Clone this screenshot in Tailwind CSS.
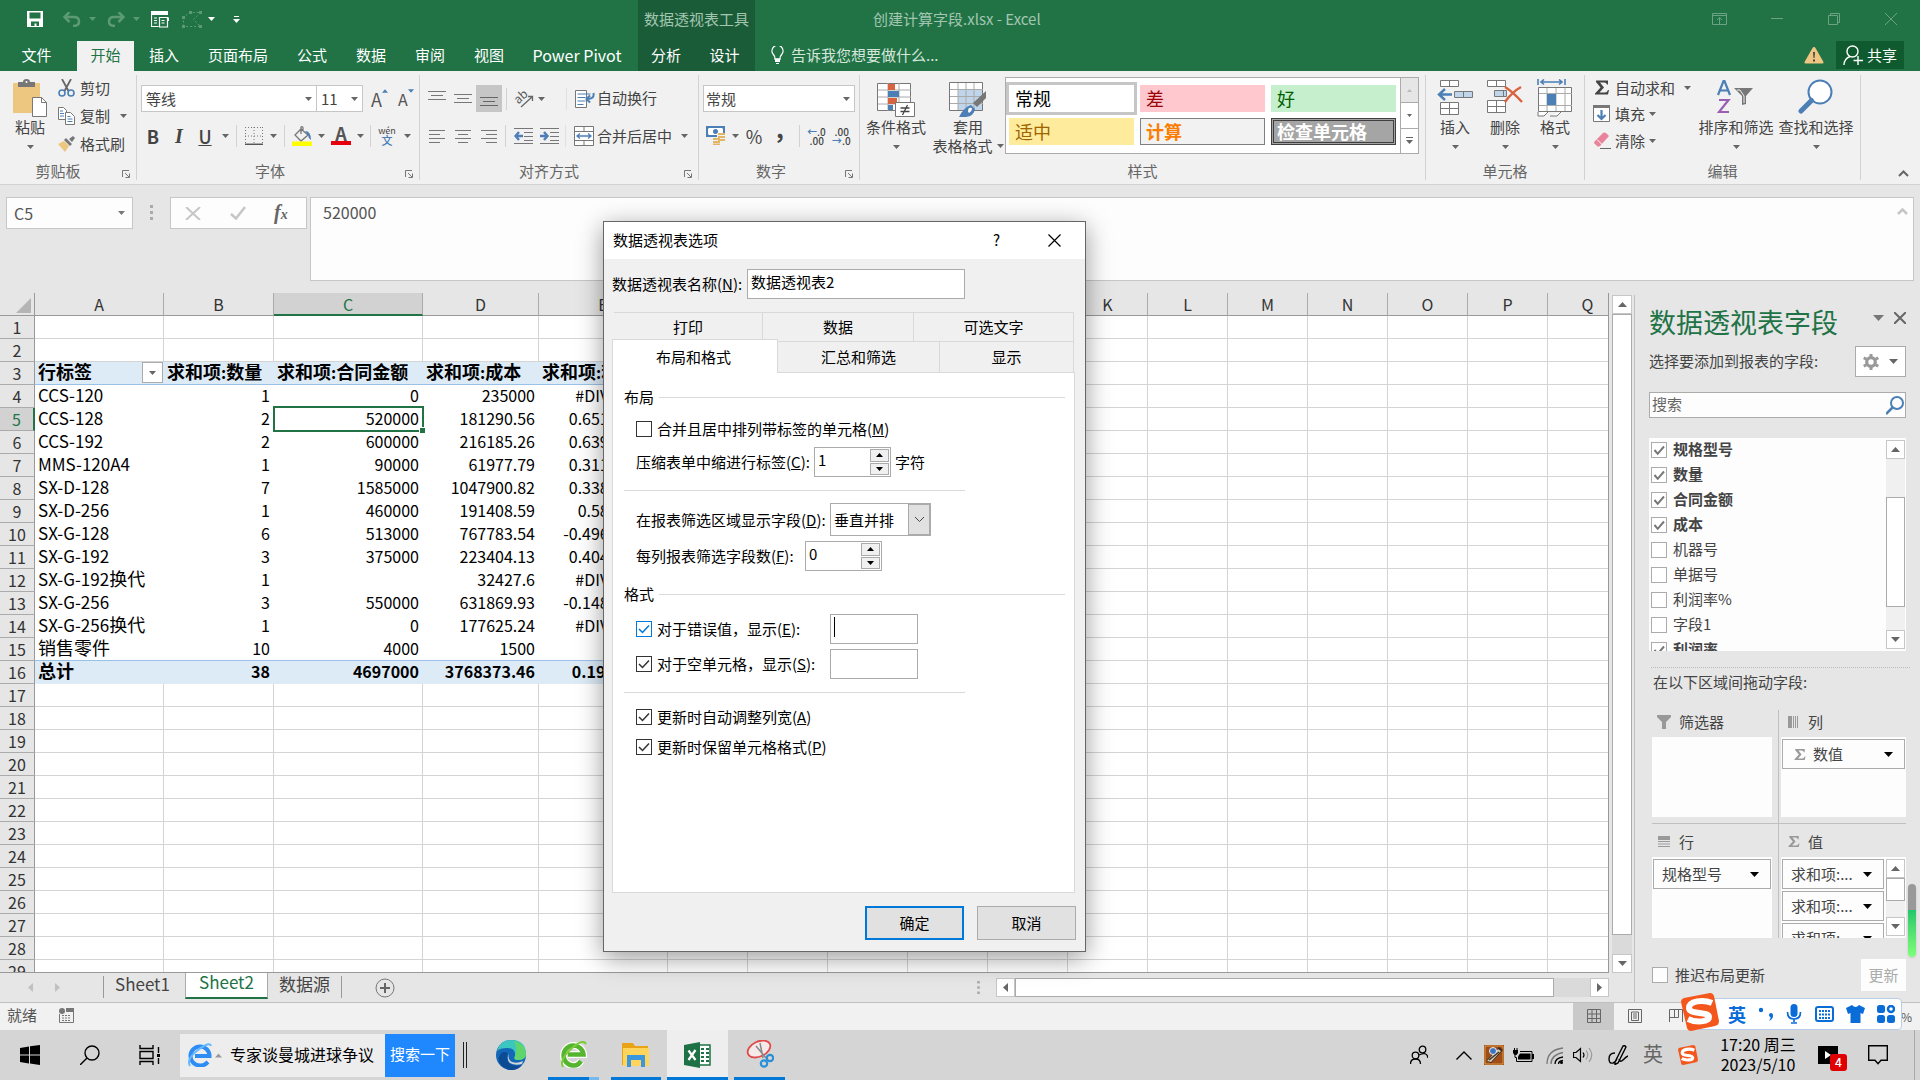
<!DOCTYPE html>
<html lang="zh-CN">
<head>
<meta charset="utf-8">
<title>创建计算字段.xlsx - Excel</title>
<script src="https://cdn.jsdelivr.net/npm/@tailwindcss/browser@4"></script>
</head>
<body class="flex h-screen flex-col overflow-hidden bg-[#e6e6e6] font-['Noto_Sans_CJK_SC',sans-serif] text-[15px] leading-5 text-[#444]">

<!-- Shared glyphs -->
<svg class="hidden" aria-hidden="true">
  <symbol id="down" viewBox="0 0 7 4"><path d="M0 0h7L3.500 4z" fill="currentColor"/></symbol>
  <symbol id="down-lg" viewBox="0 0 11 6"><path d="M0 0h11L5.500 6z" fill="currentColor"/></symbol>
  <symbol id="up-lg" viewBox="0 0 9 5"><path d="M0 5h9L4.500 0z" fill="currentColor"/></symbol>
  <symbol id="launch" viewBox="0 0 8 8"><path d="M.5 7V.5H7M3 3l4 4M7.500 3.500v4h-4" fill="none" stroke="#777"/></symbol>
  <symbol id="tick" viewBox="0 0 16 16"><path d="M3 8l3.500 3.500L13 4.500" fill="none" stroke="currentColor" stroke-width="1.500"/></symbol>
  <symbol id="tick-bold" viewBox="0 0 16 16"><path d="M3.500 8l3.200 3.800L13 4.500" fill="none" stroke="#777" stroke-width="2"/></symbol>
  <symbol id="sogou" viewBox="0 0 38 38"><path d="M3 5L29 0q3 0 4 3l5 25q0 4-4 5L10 38q-3 0-4-3L0 9q0-3 3-4z" fill="#f4571c"/><path d="M31 10C22 6 8 8 8 15c0 7 20 3 20 9 0 5-13 6-21 2" fill="none" stroke="#fff" stroke-width="6"/></symbol>
  <symbol id="sigma" viewBox="0 0 14 14"><path d="M1 0h12v4h-1q-.5-2-3-2H5l4 5-4.500 5H10q2 0 3-2.500h1L13 14H0v-1l5.500-6L1 1.500z" fill="currentColor"/></symbol>
</svg>

<!-- Title bar and ribbon tabs -->
<header class="flex h-[71px] shrink-0 bg-[#217346] text-white">
  <div class="flex w-[638px] shrink-0 flex-col">
    <div class="flex h-[41px] items-center pb-[3px] pl-[27px] text-[#5c9a76]">
      <svg class="h-4 w-4" viewBox="0 0 16 16"><path d="M0 0h16v16H0z" fill="#fff"/><path d="M2.500 1.500h11v6h-11zM4 10.500h8V15H9.500v-2.500H7.500V15H4z" fill="#217346"/></svg>
      <svg class="ml-5 h-[15px] w-[18px]" viewBox="0 0 18 15"><path d="M1 5h10q5 0 5 4.500T10 14M6.500 0L1.500 5l5 5" fill="none" stroke="currentColor" stroke-width="2.500"/></svg>
      <svg class="ml-2 h-1 w-[7px]"><use href="#down"/></svg>
      <svg class="ml-[11px] h-[15px] w-[18px]" viewBox="0 0 18 15"><path d="M17 5H7Q2 5 2 9.500T8 14M11.500 0l5 5-5 5" fill="none" stroke="currentColor" stroke-width="2.500"/></svg>
      <svg class="ml-2 h-1 w-[7px]"><use href="#down"/></svg>
      <svg class="ml-[11px] h-[17px] w-[18px]" viewBox="0 0 18 17"><path d="M0 0h17v4H0z" fill="#fff"/><path d="M.5 4v11.500h7M3 7h3M3 9.500h3M3 12h3M8.500 6.500h8v9.500H8.500zM10.500 9.500h3M10.500 12h3M16.500 7h1v3" fill="none" stroke="#fff" stroke-width="1.200"/></svg>
      <svg class="ml-[13px] h-[17px] w-5" viewBox="0 0 20 17"><path d="M1.500 15.500v-9l6-5h11l-7 7 7 7z" fill="none" stroke="currentColor" stroke-dasharray="2 2"/><path d="M0 14h3v3H0zM0 5h3v3H0zM7 0h3v3H7zM17 0h3v3h-3zM17 14h3v3h-3z" fill="currentColor"/></svg>
      <svg class="ml-[6px] h-1 w-[7px] text-white"><use href="#down"/></svg>
      <svg class="ml-[18px] h-[7px] w-[7px] text-white" viewBox="0 0 7 7"><path d="M1 0h5v1H1zM0 3h7L3.500 7z" fill="currentColor"/></svg>
    </div>
    <nav class="flex flex-1 items-stretch">
      <button class="w-[77px] pr-1 pb-[3px]">文件</button>
      <button class="w-[57px] bg-[#f1f1f1] pb-[3px] text-[#217346]">开始</button>
      <button class="w-[60px] pb-[3px]">插入</button>
      <button class="w-[88px] pb-[3px]">页面布局</button>
      <button class="w-[60px] pb-[3px]">公式</button>
      <button class="w-[58px] pb-[3px]">数据</button>
      <button class="w-[60px] pb-[3px]">审阅</button>
      <button class="w-[58px] pb-[3px]">视图</button>
      <button class="w-[118px] pb-[3px] text-base leading-5">Power Pivot</button>
    </nav>
  </div>
  <div class="flex w-[117px] shrink-0 flex-col bg-[#1b5c38]">
    <div class="flex h-[41px] items-center justify-center pb-[3px] text-[#a3c6b1]">数据透视表工具</div>
    <nav class="flex flex-1"><button class="w-[56px] pb-[3px]">分析</button><button class="w-[61px] pb-[3px]">设计</button></nav>
  </div>
  <div class="flex min-w-0 flex-1 flex-col">
    <div class="flex h-[41px] items-center justify-between pr-[23px] pb-[3px] pl-[118px] text-[#a3c6b1]">
      <span>创建计算字段.xlsx - Excel</span>
      <span class="flex items-center text-[#6ba384]">
        <button aria-label="功能区显示选项"><svg class="h-3 w-[15px]" viewBox="0 0 15 12"><path d="M.5.500h14v11H.5zM.5 2.500h14M7.500 11V5M5 7l2.500-2.500L10 7" fill="none" stroke="currentColor"/></svg></button>
        <button class="ml-11" aria-label="最小化"><svg class="h-3 w-3" viewBox="0 0 12 12"><path d="M0 5.500h12" stroke="currentColor"/></svg></button>
        <button class="ml-[45px]" aria-label="还原"><svg class="h-3 w-3" viewBox="0 0 12 12"><path d="M.5 2.500h9v9h-9zM2.500 2.500v-2h9v9h-2" fill="none" stroke="currentColor"/></svg></button>
        <button class="ml-[45px]" aria-label="关闭"><svg class="h-3 w-3" viewBox="0 0 12 12"><path d="M0 0l12 12M12 0L0 12" stroke="currentColor"/></svg></button>
      </span>
    </div>
    <div class="flex flex-1 items-center pr-4 pb-[2px] pl-4 text-[#d5e6dc]">
      <svg class="mr-[7px] h-[18px] w-[13px]" viewBox="0 0 13 18"><path d="M4 13q0-3-2-5A5.500 5.500 0 1 1 11 8q-2 2-2 5z" fill="none" stroke="#fff" stroke-width="1.300"/><path d="M4 13h5v3H4zM5 17h3v1H5z" fill="#fff"/></svg>
      <span class="flex-1">告诉我您想要做什么...</span>
      <svg class="mr-3 h-[18px] w-5" viewBox="0 0 20 18"><path d="M10 1q1 0 1.500 1L19.500 16q0 1.500-1 1.500h-17q-1 0-1-1.500L8.500 2Q9 1 10 1z" fill="#eec681"/><path d="M9 6h2l-.5 6h-1zM9 13.500h2v2H9z" fill="#444"/></svg>
      <button class="flex h-[28px] w-[68px] items-center justify-center gap-1 bg-[#0f5b2f] text-white">
        <svg class="h-5 w-5" viewBox="0 0 20 20"><circle cx="9.500" cy="6.500" r="5.500" fill="none" stroke="#fff" stroke-width="1.400"/><path d="M1 20q0-6 6-8.500M15 11v9M10.500 15.500H20" fill="none" stroke="#fff" stroke-width="1.400"/></svg>共享
      </button>
    </div>
  </div>
</header>

<!-- Ribbon -->
<section class="flex h-[114px] shrink-0 border-b border-[#d2d2d2] bg-[#f1f1f1] py-1 text-[#444]">
  <!-- clipboard -->
  <div class="relative flex w-[137px] shrink-0 flex-col border-r border-[#d2d2d2]">
    <div class="flex flex-1">
      <button class="flex w-14 flex-col items-center pt-1 pl-1">
        <svg class="h-[38px] w-[34px]" viewBox="0 0 34 38"><path d="M0 4h27v30H0z" fill="#edc77f"/><path d="M5 8V3h5q0-3 3.500-3T17 3h5v5z" fill="#777"/><circle cx="13.500" cy="3" r="1" fill="#fff"/><path d="M19.500 18.500h9l5 5v14h-14z" fill="#fff" stroke="#777"/><path d="M28.500 18.500v5h5" fill="none" stroke="#777"/></svg>
        <span>粘贴</span><svg class="mt-2 h-1 w-[7px] text-[#666]"><use href="#down"/></svg>
      </button>
      <div class="flex flex-col">
        <button class="flex h-[26px] items-center pl-[2px]"><svg class="mr-[5px] h-[18px] w-[17px]" viewBox="0 0 17 18"><path d="M4 0l6.500 12M13 0L6.500 12" stroke="#666" stroke-width="1.800"/><circle cx="4" cy="14" r="3" fill="none" stroke="#4b7fb5" stroke-width="1.600"/><circle cx="13" cy="14" r="3" fill="none" stroke="#4b7fb5" stroke-width="1.600"/></svg>剪切</button>
        <button class="flex h-[29px] items-center pl-[2px]"><svg class="mr-[5px] h-[18px] w-[17px]" viewBox="0 0 17 18"><path d="M.5.500h5l3 3v9h-8z" fill="#fff" stroke="#777"/><path d="M2 4h3M2 6.500h4M2 9h4" stroke="#4b7fb5"/><path d="M7.500 5.500h5l4 4v8h-9z" fill="#fff" stroke="#777"/><path d="M9.500 9.500h3M9.500 12h5M9.500 14.500h5" stroke="#4b7fb5"/></svg>复制<svg class="ml-[10px] h-1 w-[7px] text-[#666]"><use href="#down"/></svg></button>
        <button class="flex h-[28px] items-center pl-[2px]"><svg class="mr-[5px] h-4 w-[17px]" viewBox="0 0 17 16"><path d="M0 8l6-3 5 5-4 6z" fill="#edc77f"/><path d="M6 4l2-2 6 6-2 2zM11 3l4-3 2 2-3 4z" fill="#777"/></svg>格式刷</button>
      </div>
    </div>
    <div class="flex h-[18px] items-center justify-center pr-5 text-[#666]">剪贴板</div>
    <svg class="absolute right-[6px] bottom-[2px] h-2 w-2"><use href="#launch"/></svg>
  </div>
  <!-- font -->
  <div class="relative flex w-[283px] shrink-0 flex-col border-r border-[#d2d2d2] pl-1">
    <div class="flex flex-1 flex-col gap-[10px] pt-[10px]">
      <div class="flex h-[27px] items-center">
        <button class="flex h-[27px] w-[176px] items-center justify-between border border-[#c6c6c6] bg-white px-1">等线<svg class="h-1 w-[7px] text-[#666]"><use href="#down"/></svg></button>
        <button class="-ml-px flex h-[27px] w-[47px] items-center justify-between border border-[#c6c6c6] bg-white px-1">11<svg class="h-1 w-[7px] text-[#666]"><use href="#down"/></svg></button>
        <button class="ml-2 flex items-start text-lg leading-5 text-[#555]">A<svg class="h-1 w-[6px] text-[#4b7fb5]" viewBox="0 0 7 4"><path d="M0 4h7L3.500 0z" fill="currentColor"/></svg></button>
        <button class="ml-[10px] flex items-start text-base leading-5 text-[#555]">A<svg class="h-1 w-[6px] text-[#4b7fb5]"><use href="#down"/></svg></button>
      </div>
      <div class="flex h-[27px] items-center text-[#444]">
        <button class="w-6 text-lg leading-5 font-bold">B</button>
        <button class="w-[28px] font-['Liberation_Serif',serif] text-xl leading-5 font-bold italic">I</button>
        <button class="w-6 text-lg leading-5 font-medium underline">U</button>
        <svg class="mx-[5px] h-1 w-[7px] text-[#666]"><use href="#down"/></svg>
        <span class="mx-[2px] h-[22px] w-px bg-[#d2d2d2]"></span>
        <svg class="ml-[6px] h-[18px] w-[18px]" viewBox="0 0 18 18"><path d="M.5 0v17M17.500 0v17M9 0v17M0 .5h18M0 9h18" stroke="#777" stroke-dasharray="1 2"/><path d="M0 17.300h18" stroke="#555" stroke-width="1.500"/></svg>
        <svg class="mx-[7px] h-1 w-[7px] text-[#666]"><use href="#down"/></svg>
        <span class="h-[22px] w-px bg-[#d2d2d2]"></span>
        <svg class="ml-[7px] h-5 w-5" viewBox="0 0 20 20"><path d="M9 3l7 6-7 6-6-6zM9 8V1q1.500-1 2 1v3" fill="none" stroke="#777" stroke-width="1.300"/><path d="M13 5q6 0 6 9-3-2-3-5z" fill="#4b7fb5"/><path d="M0 15.500h20V20H0z" fill="#ff0"/></svg>
        <svg class="mx-[6px] h-1 w-[7px] text-[#666]"><use href="#down"/></svg>
        <span class="flex w-5 flex-col items-center text-lg leading-[15px] font-bold text-[#555]">A<i class="h-1 w-5 bg-red-600"></i></span>
        <svg class="mx-[6px] h-1 w-[7px] text-[#666]"><use href="#down"/></svg>
        <span class="h-[22px] w-px bg-[#d2d2d2]"></span>
        <button class="ml-[6px] flex w-5 flex-col items-center text-[9px] leading-[9px]">wén<span class="text-[11px] leading-[11px] font-medium text-[#4b7fb5]">文</span></button>
        <svg class="ml-[7px] h-1 w-[7px] text-[#666]"><use href="#down"/></svg>
      </div>
    </div>
    <div class="flex h-[18px] items-center justify-center pr-5 text-[#666]">字体</div>
    <svg class="absolute right-[6px] bottom-[2px] h-2 w-2"><use href="#launch"/></svg>
  </div>
  <!-- alignment -->
  <div class="relative flex w-[279px] shrink-0 flex-col border-r border-[#d2d2d2]">
    <div class="flex flex-1 flex-col gap-[10px] pt-[10px]">
      <div class="flex h-[27px] items-center">
        <svg class="ml-2 h-4 w-[18px]" viewBox="0 0 18 16"><path d="M0 .5h18M3 4.500h12M0 8.500h18" stroke="#777"/></svg>
        <svg class="ml-2 h-4 w-[18px]" viewBox="0 0 18 16"><path d="M0 3.500h18M3 7.500h12M0 11.500h18" stroke="#777"/></svg>
        <span class="ml-1 flex h-[27px] w-[26px] items-center justify-center bg-[#c6c6c6]"><svg class="h-4 w-[18px]" viewBox="0 0 18 16"><path d="M0 6.500h18M3 10.500h12M0 14.500h18" stroke="#666"/></svg></span>
        <span class="ml-1 h-[22px] w-px bg-[#d2d2d2]"></span>
        <svg class="ml-[7px] h-[18px] w-5 overflow-visible" viewBox="0 0 20 18"><text x="1" y="12" font-size="12" fill="#555" transform="rotate(-42 6 9)">ab</text><path d="M7 17L18 7M14 6.500h4.500V11" fill="none" stroke="#666" stroke-width="1.300"/></svg>
        <svg class="ml-1 h-1 w-[7px] text-[#666]"><use href="#down"/></svg>
        <span class="ml-[21px] h-[22px] w-px bg-[#e0e0e0]"></span>
        <svg class="ml-2 h-[18px] w-5" viewBox="0 0 20 18"><path d="M.5.500h11v17H.5z" fill="#fff" stroke="#777"/><path d="M2.500 4h13M2.500 7.500h8M2.500 11h8M2.500 14.500h6" stroke="#4b7fb5"/><path d="M18.500 3q1 6-6 6M15 5.500L11.500 9l3.500 3.500" fill="none" stroke="#4b7fb5" stroke-width="2"/></svg>
        <button class="ml-[2px] pb-px">自动换行</button>
      </div>
      <div class="flex h-[27px] items-center">
        <svg class="ml-[9px] h-4 w-4" viewBox="0 0 16 16"><path d="M0 2.500h16M0 6.500h11M0 10.500h16M0 14.500h11" stroke="#777"/></svg>
        <svg class="ml-[10px] h-4 w-4" viewBox="0 0 16 16"><path d="M0 2.500h16M3 6.500h10M0 10.500h16M3 14.500h10" stroke="#777"/></svg>
        <svg class="ml-[10px] h-4 w-4" viewBox="0 0 16 16"><path d="M0 2.500h16M5 6.500h11M0 10.500h16M5 14.500h11" stroke="#777"/></svg>
        <span class="ml-2 h-[22px] w-px bg-[#d2d2d2]"></span>
        <svg class="ml-2 h-4 w-[19px]" viewBox="0 0 19 16"><path d="M0 .5h19M10 4.500h9M10 8.500h9M10 12.500h9M0 15.500h19" stroke="#777"/><path d="M1.500 8H9M5 4L1.500 8 5 12" fill="none" stroke="#4b7fb5" stroke-width="2.400"/></svg>
        <svg class="ml-[7px] h-4 w-[19px]" viewBox="0 0 19 16"><path d="M0 .5h19M10 4.500h9M10 8.500h9M10 12.500h9M0 15.500h19" stroke="#777"/><path d="M0 8h7.500M4 4l3.500 4L4 12" fill="none" stroke="#4b7fb5" stroke-width="2.400"/></svg>
        <span class="ml-[6px] h-[22px] w-px bg-[#e0e0e0]"></span>
        <svg class="ml-2 h-5 w-5" viewBox="0 0 20 20"><path d="M.5.500h19v19H.5zM.5 5.500h19M.5 14.500h19M10 .5v5M10 14.500v5" fill="#fff" stroke="#777"/><path d="M3 10h14M6 7.500L3 10l3 2.500M14 7.500l3 2.500-3 2.500" fill="none" stroke="#4b7fb5" stroke-width="1.300"/></svg>
        <button class="ml-[3px]">合并后居中</button>
        <svg class="ml-[9px] h-1 w-[7px] text-[#666]"><use href="#down"/></svg>
      </div>
    </div>
    <div class="flex h-[18px] items-center justify-center pr-5 text-[#666]">对齐方式</div>
    <svg class="absolute right-[6px] bottom-[2px] h-2 w-2"><use href="#launch"/></svg>
  </div>
  <!-- number -->
  <div class="relative flex w-[161px] shrink-0 flex-col border-r border-[#d2d2d2] pl-1">
    <div class="flex flex-1 flex-col gap-[10px] pt-[10px]">
      <button class="flex h-[27px] w-[152px] items-center justify-between border border-[#c6c6c6] bg-white pr-1 pl-[2px]">常规<svg class="h-1 w-[7px] text-[#666]"><use href="#down"/></svg></button>
      <div class="flex h-[27px] items-center">
        <svg class="ml-[3px] h-[19px] w-5" viewBox="0 0 20 19"><path d="M0 0h19v11H0z" fill="#4b7fb5"/><path d="M2 3l1-1h13l1 1v5l-1 1H3L2 8z" fill="#fff"/><circle cx="9.500" cy="5.500" r="2.500" fill="#4b7fb5"/><path d="M11 7h9v10h-6v2H6v-7h5z" fill="#f1f1f1"/><path d="M12 8h7M12 11h7M12 14h7M7 13h7M7 16h7M7 18.500h7" stroke="#e3b566" stroke-width="1.800"/></svg>
        <svg class="ml-[6px] h-1 w-[7px] text-[#666]"><use href="#down"/></svg>
        <button class="ml-[6px] w-[18px] text-lg leading-5">%</button>
        <button class="ml-[11px] w-3 pb-4 text-2xl leading-3 font-bold">,</button>
        <span class="ml-[13px] h-[22px] w-px bg-[#d2d2d2]"></span>
        <span class="ml-[7px] w-[17px] text-right text-[10px] leading-[9px] font-medium"><b class="text-[#4b7fb5]">←</b>.0<br>.00</span>
        <span class="ml-2 w-[17px] text-right text-[10px] leading-[9px] font-medium">.00<br><b class="text-[#4b7fb5]">→</b>.0</span>
      </div>
    </div>
    <div class="flex h-[18px] items-center justify-center pr-5 text-[#666]">数字</div>
    <svg class="absolute right-[6px] bottom-[2px] h-2 w-2"><use href="#launch"/></svg>
  </div>
  <!-- styles -->
  <div class="flex w-[566px] shrink-0 flex-col border-r border-[#d2d2d2]">
    <div class="flex min-h-0 flex-1">
      <button class="flex w-[72px] flex-col items-center pt-[7px]">
        <svg class="h-[35px] w-[38px]" viewBox="0 0 38 35"><path d="M.5 1.500h33v27H.5z" fill="#fff" stroke="#777"/><path d="M11 1v28M22 1v28M1 8h33M1 15h33M1 22h33" stroke="#aaa"/><path d="M11 2h7v6h-7zM11 16h9v6h-9z" fill="#d9623f"/><path d="M11 9h11v6H11zM11 23h5v5h-5z" fill="#4b7fb5"/><path d="M18.500 20.500h19v14h-19z" fill="#fff" stroke="#777"/><path d="M23.500 26h9M23.500 29.500h9M30.500 23l-5 10" stroke="#444" stroke-width="1.300"/></svg>
        <span>条件格式</span><svg class="mt-2 h-1 w-[7px] text-[#666]"><use href="#down"/></svg>
      </button>
      <button class="flex w-[72px] flex-col items-center pt-[7px]">
        <svg class="h-[35px] w-[38px]" viewBox="0 0 38 35"><path d="M.5.500h33v28H.5z" fill="#fff" stroke="#777"/><path d="M9 8h24v20H9z" fill="#c0d4ea"/><path d="M9 1v27M17 1v27M25 1v27M1 7.500h33M1 14.500h33M1 21.500h33" stroke="#aaa"/><path d="M37 9v7l-9 9-4-4z" fill="#777"/><path d="M10 35q5-10 12-12l4 4q-1 7-9 8z" fill="#4b7fb5"/><path d="M20 26q3-1 3 1t-3 4q-2-2 0-5z" fill="#fff"/></svg>
        <span class="leading-5">套用</span><span class="flex items-center gap-1 text-[15px] leading-[18px] whitespace-nowrap">表格格式<svg class="h-1 w-[7px] text-[#666]"><use href="#down"/></svg></span>
      </button>
      <div class="mt-[2px] ml-[1px] flex h-[77px] w-[414px] border border-[#ababab] bg-white text-lg leading-6">
        <div class="grid flex-1 grid-cols-3 content-start gap-[6px] py-[7px] pr-1 pl-[3px]">
          <button class="h-[27px] bg-white pb-[2px] pl-[6px] text-left text-black outline-[3px] outline-[#c6c6c6]">常规</button>
          <button class="h-[27px] bg-[#ffc7ce] pb-[2px] pl-[6px] text-left text-[#9c0006]">差</button>
          <button class="h-[27px] bg-[#c6efce] pb-[2px] pl-[6px] text-left text-[#006100]">好</button>
          <button class="h-[27px] bg-[#ffeb9c] pb-[2px] pl-[6px] text-left text-[#9c6500]">适中</button>
          <button class="flex h-[27px] items-center border border-[#7f7f7f] bg-[#f2f2f2] pb-[2px] pl-[5px] font-bold text-[#fa7d00]">计算</button>
          <button class="flex h-[27px] items-center border-3 border-double border-[#3f3f3f] bg-[#a5a5a5] pb-[2px] pl-[3px] font-bold text-white">检查单元格</button>
        </div>
        <div class="flex w-[18px] flex-col divide-y divide-[#ababab] border-l border-[#ababab] text-[#666]">
          <button class="flex flex-1 items-center justify-center bg-[#e6e6e6]"><svg class="h-[3px] w-[5px] text-[#bbb]"><use href="#up-lg"/></svg></button>
          <button class="flex flex-1 items-center justify-center"><svg class="h-[3px] w-[5px]"><use href="#down"/></svg></button>
          <button class="flex flex-1 items-center justify-center"><svg class="h-[7px] w-[7px]" viewBox="0 0 7 7"><path d="M0 0h7v1H0zM0 3h7L3.500 7z" fill="currentColor"/></svg></button>
        </div>
      </div>
    </div>
    <div class="flex h-[18px] items-center justify-center text-[#666]">样式</div>
  </div>
  <!-- cells -->
  <div class="flex w-[159px] shrink-0 flex-col border-r border-[#d2d2d2]">
    <div class="flex flex-1 justify-center">
      <button class="flex w-[50px] flex-col items-center pt-1">
        <svg class="h-[38px] w-9" viewBox="0 0 36 38"><path d="M3.500 1.500h18v6h-18zM12.500 1.500v6M3.500 23.500h18v12h-18zM12.500 23.500v12M3.500 29.500h18" fill="#fff" stroke="#777"/><path d="M17.500 12.500h18v6h-18zM26.500 12.500v6" fill="#c0d4ea" stroke="#777"/><path d="M1.500 15.500H15M8 10l-6 5.500L8 21" fill="none" stroke="#4b7fb5" stroke-width="2.400"/></svg>
        <span>插入</span><svg class="mt-2 h-1 w-[7px] text-[#666]"><use href="#down"/></svg>
      </button>
      <button class="flex w-[50px] flex-col items-center pt-1">
        <svg class="h-[38px] w-9" viewBox="0 0 36 38"><path d="M.5 1.500h18v6H.5zM9.500 1.500v6M.5 21.500h18v12H.5zM9.500 21.500v12M.5 27.500h18" fill="#fff" stroke="#777"/><path d="M7.500 11.500h12v6h-12zM16.500 11.500v6" fill="#c0d4ea" stroke="#777"/><path d="M18 8q8 5 17 15M34 8q-9 5-16 15" fill="none" stroke="#d9623f" stroke-width="2.400"/></svg>
        <span>删除</span><svg class="mt-2 h-1 w-[7px] text-[#666]"><use href="#down"/></svg>
      </button>
      <button class="flex w-[50px] flex-col items-center pt-1">
        <svg class="h-[38px] w-9" viewBox="0 0 36 38"><path d="M1 0v6M28 0v6M4 3h21M7 .5L4 3l3 2.500M22 .5L25 3l-3 2.500" fill="none" stroke="#4b7fb5" stroke-width="1.600"/><path d="M1.500 8.500h33v24h-33z" fill="#fff" stroke="#777"/><path d="M10 9v23M19 9v23M28 9v23M2 14.500h33M2 26.500h33" stroke="#aaa"/><path d="M10 15h9v11h-9z" fill="#4b7fb5"/><path d="M1 33l0 4h6l4-4M13 37h7l4-4" fill="#fff" stroke="#777"/></svg>
        <span>格式</span><svg class="mt-2 h-1 w-[7px] text-[#666]"><use href="#down"/></svg>
      </button>
    </div>
    <div class="flex h-[18px] items-center justify-center text-[#666]">单元格</div>
  </div>
  <!-- editing -->
  <div class="flex w-[276px] shrink-0 flex-col border-r border-[#d2d2d2]">
    <div class="flex flex-1">
      <div class="flex w-[109px] shrink-0 flex-col pl-2">
        <button class="flex h-[25px] items-center"><svg class="mr-[6px] ml-[2px] h-[15px] w-[14px]"><use href="#sigma"/></svg>自动求和<svg class="ml-[9px] h-1 w-[7px] text-[#666]"><use href="#down"/></svg></button>
        <button class="flex h-[27px] items-center"><svg class="mr-[5px] h-[17px] w-[17px]" viewBox="0 0 17 17"><path d="M.5.500h16v16H.5z" fill="#fff" stroke="#777"/><path d="M0 0h17v3H0z" fill="#777"/><path d="M8.500 5v9M4.500 10l4 4 4-4" fill="none" stroke="#4b7fb5" stroke-width="2.200"/></svg>填充<svg class="ml-1 h-1 w-[7px] text-[#666]"><use href="#down"/></svg></button>
        <button class="flex h-[27px] items-center"><svg class="mr-1 h-[17px] w-[18px]" viewBox="0 0 18 17"><path d="M2 9l8-8q1-1 3 0l3 3-9 10q-2 1-3 0l-2-2q-2-1 0-3z" fill="#e8839b"/><path d="M4 7.500l5 5" stroke="#fff"/><path d="M7 16.500h11" stroke="#666"/></svg>清除<svg class="ml-1 h-1 w-[7px] text-[#666]"><use href="#down"/></svg></button>
      </div>
      <button class="flex w-[84px] flex-col items-center pt-1">
        <svg class="h-[38px] w-[38px]" viewBox="0 0 38 38"><path d="M1 16L6.500 2h1L13 16M3 11.500h8" fill="none" stroke="#4b7fb5" stroke-width="2.200"/><path d="M2 21h9.500L2 33h10" fill="none" stroke="#9a5fb5" stroke-width="2.200"/><path d="M17 9h19l-7 8v8l-4 1v-9z" fill="#777"/><path d="M20 11h3l4 6v7" fill="none" stroke="#f1f1f1"/></svg>
        <span class="whitespace-nowrap">排序和筛选</span><svg class="mt-2 h-1 w-[7px] text-[#666]"><use href="#down"/></svg>
      </button>
      <button class="flex w-[76px] flex-col items-center pt-1">
        <svg class="h-[38px] w-[36px]" viewBox="0 0 36 38"><circle cx="22" cy="13" r="11.500" fill="#fff" stroke="#4b7fb5" stroke-width="2"/><path d="M13.500 21.500L3 32" stroke="#4b7fb5" stroke-width="5" stroke-linecap="round"/></svg>
        <span class="whitespace-nowrap">查找和选择</span><svg class="mt-2 h-1 w-[7px] text-[#666]"><use href="#down"/></svg>
      </button>
    </div>
    <div class="flex h-[18px] items-center justify-center text-[#666]">编辑</div>
  </div>
  <div class="flex flex-1 items-end justify-end pr-[11px] pb-[3px]"><svg class="h-[7px] w-[11px]" viewBox="0 0 11 7"><path d="M1 6l4.500-4.500L10 6" fill="none" stroke="#666" stroke-width="2"/></svg></div>
</section>

<!-- Formula bar -->
<section class="flex h-[96px] shrink-0 items-start pt-3 pr-[6px] pl-[6px] text-base leading-5 text-[#555]">
  <button class="flex h-8 w-[127px] items-center justify-between border border-[#c6c6c6] bg-[#fdfdfd] px-[7px]">C5<svg class="h-1 w-[7px] text-[#777]"><use href="#down"/></svg></button>
  <svg class="mx-[17px] mt-2 h-[15px] w-[3px]" viewBox="0 0 3 15"><path d="M0 0h3v3H0zM0 6h3v3H0zM0 12h3v3H0z" fill="#aaa"/></svg>
  <div class="flex h-8 w-[137px] items-center justify-around border border-[#c6c6c6] bg-[#fdfdfd] pr-1">
    <svg class="h-[13px] w-4" viewBox="0 0 16 13"><path d="M1 0l14 13M15 0L1 13" stroke="#c6c6c6" stroke-width="2"/></svg>
    <svg class="h-[14px] w-4" viewBox="0 0 16 14"><path d="M1 8l5 4.500L15 1" fill="none" stroke="#c6c6c6" stroke-width="2.500"/></svg>
    <i class="font-['Liberation_Serif',serif] text-xl leading-5 font-bold text-[#666]">f<small class="text-sm">x</small></i>
  </div>
  <div class="ml-[3px] flex h-[84px] flex-1 justify-between border border-[#c6c6c6] bg-[#fdfdfd] py-1 pr-[5px] pl-3"><span>520000</span>
    <svg class="mt-[6px] h-[7px] w-[11px]" viewBox="0 0 11 7"><path d="M1 6l4.500-4.500L10 6" fill="none" stroke="#c6c6c6" stroke-width="2.500"/></svg></div>
</section>

<!-- Workbook and field pane -->
<main class="flex min-h-0 flex-1">
  <div class="flex min-w-0 flex-1 flex-col">
    <div class="flex min-h-0 flex-1 pt-3">
      <div class="min-w-0 flex-1 overflow-hidden border-r border-b border-[#999]">
        <table class="w-[1627px] table-fixed border-separate border-spacing-0 text-base leading-5 whitespace-nowrap text-black">
          <colgroup id="cols"></colgroup>
          <thead><tr id="heads"></tr></thead>
          <tbody id="rows"></tbody>
        </table>
      </div>
      <div class="mr-[2px] ml-[3px] flex w-5 flex-col pt-[2px]">
        <button class="flex h-[19px] items-center justify-center border border-[#c6c6c6] bg-white text-[#666]"><svg class="h-[5px] w-[9px]"><use href="#up-lg"/></svg></button>
        <div class="flex-1 bg-[#dadada]"><div class="h-[97%] border border-[#ababab] bg-white"></div></div>
        <button class="flex h-[19px] items-center justify-center border border-[#c6c6c6] bg-white text-[#666]"><svg class="h-[5px] w-[9px]"><use href="#down-lg"/></svg></button>
      </div>
    </div>
    <!-- Sheet tabs -->
    <div class="flex h-[29px] shrink-0 items-start text-base">
      <div class="flex h-[28px] w-[103px] items-center gap-[22px] pl-7 text-[#c0c0c0]">
        <svg class="h-[9px] w-[5px]" viewBox="0 0 5 9"><path d="M5 0v9L0 4.500z" fill="currentColor"/></svg>
        <svg class="h-[9px] w-[5px]" viewBox="0 0 5 9"><path d="M0 0v9l5-4.500z" fill="currentColor"/></svg>
      </div>
      <button class="mt-[3px] h-[22px] w-[82px] border-l border-[#999] pr-1 pb-[6px] text-[17px] leading-4">Sheet1</button>
      <button class="h-[26px] w-[83px] border-x border-b-2 border-x-[#ababab] border-b-[#217346] bg-white pb-[6px] text-[17px] leading-4 text-[#217346]">Sheet2</button>
      <button class="mt-[3px] h-[22px] w-[74px] border-r border-[#999] pb-[6px] text-[17px] leading-4">数据源</button>
      <svg class="mt-[5px] ml-[33px] h-5 w-5" viewBox="0 0 20 20"><circle cx="10" cy="10" r="9" fill="none" stroke="#777"/><path d="M5 10h10M10 5v10" stroke="#666" stroke-width="2"/></svg>
      <span class="flex-1"></span>
      <svg class="mt-2 mr-4 h-[13px] w-[3px]" viewBox="0 0 3 15"><path d="M0 0h3v3H0zM0 6h3v3H0zM0 12h3v3H0z" fill="#aaa"/></svg>
      <div class="mt-[5px] mr-[25px] flex h-[19px] w-[613px]">
        <button class="flex w-[19px] items-center justify-center border border-[#c6c6c6] bg-white text-[#666]"><svg class="h-[9px] w-[5px]" viewBox="0 0 5 9"><path d="M5 0v9L0 4.500z" fill="currentColor"/></svg></button>
        <div class="flex-1 bg-[#dadada]"><div class="h-[19px] w-[539px] border border-[#ababab] bg-white"></div></div>
        <button class="flex w-[19px] items-center justify-center border border-[#c6c6c6] bg-white text-[#666]"><svg class="h-[9px] w-[5px]" viewBox="0 0 5 9"><path d="M0 0v9l5-4.500z" fill="currentColor"/></svg></button>
      </div>
    </div>
  </div>

  <!-- Pivot field pane -->
  <aside class="mt-[14px] flex w-[286px] shrink-0 flex-col border-l border-[#c0c0c0] pr-[14px] pl-[14px]">
    <div class="flex h-[48px] items-center pb-[2px]">
      <h2 class="flex-1 pt-[7px] text-[27px] leading-9 text-[#217346]">数据透视表字段</h2>
      <svg class="mr-[10px] h-[6px] w-[11px] text-[#777]"><use href="#down-lg"/></svg>
      <svg class="h-3 w-3" viewBox="0 0 12 12"><path d="M0 0l12 12M12 0L0 12" stroke="#666" stroke-width="2"/></svg>
    </div>
    <div class="mt-[3px] flex h-[31px] items-center justify-between">
      <span class="pb-[2px]">选择要添加到报表的字段:</span>
      <button class="flex h-[31px] w-[51px] items-center justify-center gap-[10px] border border-[#ababab] bg-white" aria-label="工具"><svg class="h-4 w-4" viewBox="0 0 16 16"><path d="M6.500 0h3v3h-3zM6.500 13h3v3h-3zM0 5l1.500-2.600 2.600 1.500-1.500 2.600zM11.900 12.100l1.500-2.600L16 11l-1.500 2.600zM16 5l-1.500-2.600-2.600 1.500 1.500 2.600zM4.100 12.100L2.600 9.500 0 11l1.500 2.600z" fill="#999"/><circle cx="8" cy="8" r="4.300" fill="none" stroke="#999" stroke-width="3.200"/></svg><svg class="h-[5px] w-[9px] text-[#666]"><use href="#down-lg"/></svg></button>
    </div>
    <label class="mt-[15px] flex h-[26px] items-center border border-[#ababab] bg-[#fdfdfd]"><input class="min-w-0 flex-1 px-[2px] pb-[3px] placeholder:text-[#666]" placeholder="搜索" aria-label="搜索"><svg class="mr-[1px] h-[19px] w-[18px]" viewBox="0 0 18 19"><circle cx="11" cy="7" r="6" fill="none" stroke="#4b7fb5" stroke-width="2"/><path d="M6.500 11.500L0 18" stroke="#4b7fb5" stroke-width="2.500"/></svg></label>
    <div class="mt-5 flex h-[213px] overflow-hidden bg-[#fdfdfd] py-[2px] pr-px">
      <div id="fields" class="-mt-[3px] -mb-[2px] flex-1 overflow-hidden pl-[2px]"></div>
      <div class="flex w-[19px] flex-col bg-[#f0f0f0]">
        <button class="flex h-[19px] items-center justify-center border border-[#c6c6c6] bg-white text-[#666]"><svg class="h-[5px] w-[9px]"><use href="#up-lg"/></svg></button>
        <div class="mt-[38px] mb-[23px] flex-1 border border-[#ababab] bg-white"></div>
        <button class="flex h-[19px] items-center justify-center border border-[#c6c6c6] bg-white text-[#666]"><svg class="h-[5px] w-[9px]"><use href="#down-lg"/></svg></button>
      </div>
    </div>
    <div class="mt-4 mr-[-4px] ml-[2px] border-t border-dotted border-[#bbb]"></div>
    <p class="mt-1 pl-1">在以下区域间拖动字段:</p>
    <div class="mt-[18px] ml-[3px] grid grid-cols-[127px_1fr] grid-rows-[114px_114px]">
      <section class="flex flex-col border-r border-b border-[#c0c0c0] pr-[6px] pb-[6px]">
        <h3 class="flex h-[27px] items-center gap-2 pb-[4px] pl-[5px]"><svg class="h-[14px] w-[14px]" viewBox="0 0 14 14"><path d="M0 0h14v2L9 7v7H5V7L0 2z" fill="#999"/></svg>筛选器</h3>
        <div class="flex-1 bg-[#fdfdfd]"></div>
      </section>
      <section class="flex flex-col border-b border-[#c0c0c0] pb-[6px] pl-[2px]">
        <h3 class="flex h-[27px] items-center gap-[10px] pb-[4px] pl-[7px]"><svg class="h-3 w-[10px]" viewBox="0 0 10 12"><path d="M0 0h4v12H0zM5 0h1v12H5zM7 0h1v12H7zM9 0h1v12H9z" fill="#999"/></svg>列</h3>
        <div class="flex-1 bg-[#fdfdfd] p-px pt-[2px]"><button class="flex h-[30px] w-full items-center border border-[#ababab] px-[11px]"><svg class="mr-[7px] h-[11px] w-3 text-[#999]"><use href="#sigma"/></svg><span class="flex-1 text-left">数值</span><svg class="h-[5px] w-[9px] text-black"><use href="#down-lg"/></svg></button></div>
      </section>
      <section class="flex flex-col border-r border-[#c0c0c0] pt-[6px] pr-[6px]">
        <h3 class="flex h-[27px] items-center gap-[9px] pb-[4px] pl-[6px]"><svg class="h-[11px] w-3" viewBox="0 0 12 11"><path d="M0 0h12v4H0zM0 5h12v1H0zM0 7.500h12v1H0zM0 10h12v1H0z" fill="#999"/></svg>行</h3>
        <div class="flex-1 bg-[#fdfdfd] p-px pt-[2px]"><button class="flex h-[30px] w-full items-center border border-[#ababab] pr-[11px] pl-2"><span class="flex-1 text-left">规格型号</span><svg class="h-[5px] w-[9px] text-black"><use href="#down-lg"/></svg></button></div>
      </section>
      <section class="flex min-h-0 flex-col pt-[6px] pl-[2px]">
        <h3 class="flex h-[27px] shrink-0 items-center gap-2 pb-[4px] pl-[7px]"><svg class="h-[11px] w-3 text-[#999]"><use href="#sigma"/></svg>值</h3>
        <div class="flex min-h-0 flex-1 gap-[2px] bg-[#fdfdfd] p-px pt-[2px] pb-[2px]">
          <div class="-mb-[2px] flex flex-1 flex-col gap-[2px] overflow-hidden">
            <button class="flex h-[30px] shrink-0 items-center border border-[#ababab] pr-[11px] pl-2"><span class="flex-1 text-left">求和项:...</span><svg class="h-[5px] w-[9px] text-black"><use href="#down-lg"/></svg></button>
            <button class="flex h-[30px] shrink-0 items-center border border-[#ababab] pr-[11px] pl-2"><span class="flex-1 text-left">求和项:...</span><svg class="h-[5px] w-[9px] text-black"><use href="#down-lg"/></svg></button>
            <button class="flex h-[30px] shrink-0 items-center border border-[#ababab] pr-[11px] pl-2"><span class="flex-1 text-left">求和项:...</span><svg class="h-[5px] w-[9px] text-black"><use href="#down-lg"/></svg></button>
          </div>
          <div class="flex w-[19px] flex-col bg-[#f0f0f0]">
            <button class="flex h-[19px] items-center justify-center border border-[#c6c6c6] bg-white text-[#666]"><svg class="h-[5px] w-[9px]"><use href="#up-lg"/></svg></button>
            <div class="h-[23px] border border-[#ababab] bg-white"></div>
            <span class="flex-1"></span>
            <button class="flex h-[19px] items-center justify-center border border-[#c6c6c6] bg-white text-[#666]"><svg class="h-[5px] w-[9px]"><use href="#down-lg"/></svg></button>
          </div>
        </div>
      </section>
    </div>
    <div class="mt-[21px] ml-[3px] flex h-8 items-center justify-between">
      <label class="flex items-center gap-[7px]"><input type="checkbox" class="h-4 w-4 appearance-none border border-[#ababab] bg-[#fdfdfd]">推迟布局更新</label>
      <button class="h-[32px] w-[45px] bg-[#fdfdfd] text-[#ababab]">更新</button>
    </div>
  </aside>
</main>

<!-- Status bar -->
<footer class="flex h-7 shrink-0 items-center border-t border-[#c0c0c0] bg-[#f1f1f1] pl-[7px] text-[#555]">
  <span class="pb-[3px]">就绪</span>
  <svg class="mb-[2px] ml-[21px] h-[15px] w-4" viewBox="0 0 16 15"><circle cx="4" cy="3" r="3" fill="#777"/><path d="M1.500 6v8.500h14V4" fill="none" stroke="#777"/><path d="M8 0h8v4H8z" fill="#777"/><path d="M4 7.500h9M4 10h9M4 12.500h9" stroke="#777" stroke-dasharray="2 1"/></svg>
  <span class="flex-1"></span>
  <button class="flex h-full w-[41px] items-center justify-center bg-[#c9c9c9] pb-[2px]"><svg class="h-[14px] w-[14px]" viewBox="0 0 14 14"><path d="M.5.500h13v13H.5zM5 0v14M9.500 0v14M0 5h14M0 9.500h14" fill="none" stroke="#666"/></svg></button>
  <button class="flex w-[41px] items-center justify-center pb-[2px]"><svg class="h-[14px] w-[14px]" viewBox="0 0 14 14"><path d="M.5.500h13v13H.5zM3.500 3v8.500h7V3zM5 5h4M5 7h4M5 9h4" fill="none" stroke="#666"/></svg></button>
  <button class="flex w-[41px] items-center justify-center pb-[2px]"><svg class="h-[14px] w-[14px]" viewBox="0 0 14 14"><path d="M.5 13V.5h13V13M.5 8.500h9v-8M5.500 0v8" fill="none" stroke="#666"/></svg></button>
  <span class="w-[224px] pr-2 text-right text-xs">%</span>
</footer>

<!-- Taskbar -->
<div class="flex h-[50px] shrink-0 items-center bg-[#d5d5d5] text-base text-black">
  <svg class="ml-5 h-5 w-5" viewBox="0 0 20 20"><path d="M0 3l9-1.500V9.500H0zM10 1.300L20 0v9.500H10zM0 10.500h9v8L0 17zM10 10.500h10V20l-10-1.500z"/></svg>
  <svg class="ml-10 h-5 w-5" viewBox="0 0 20 20"><circle cx="12" cy="8" r="7" fill="none" stroke="#000" stroke-width="1.400"/><path d="M7 13L0 20" stroke="#000" stroke-width="1.400"/></svg>
  <svg class="ml-[39px] h-5 w-[22px]" viewBox="0 0 22 20"><path d="M1 0v3.500h13V0M1 20v-3.500h13V20M1 6.500h13v7H1zM19.500 2v6M19.500 13v6" fill="none" stroke="#000" stroke-width="1.400"/><path d="M18 9h3v3h-3z"/></svg>
  <div class="ml-[19px] flex h-[43px] items-center bg-[#ededed] pl-2">
    <svg class="h-6 w-6" viewBox="0 0 24 24"><path d="M20 19q-4 4-8 3.500A9.500 9.500 0 1 1 21.500 13H7" fill="none" stroke="#2d8df5" stroke-width="4"/><path d="M2 23Q-2 16 10 7T23 3" fill="none" stroke="#66b8ff" stroke-width="2"/></svg>
    <svg class="mr-2 ml-[3px] h-[5px] w-[7px] text-[#999]"><use href="#up-lg"/></svg>
    <span class="w-[155px] pb-[3px]">专家谈曼城进球争议</span>
    <button class="h-[43px] w-[70px] bg-[#2088ff] pb-[2px] text-[15px] text-white">搜索一下</button>
  </div>
  <span class="ml-2 h-[26px] w-1 border-x border-[#222]"></span>
  <svg class="ml-[29px] h-[30px] w-[30px]" viewBox="0 0 30 30"><circle cx="15" cy="15" r="15" fill="#1467b8"/><path d="M1 11Q4 0 15 0q14 0 15 13 0 7-8 7-5 0-3-4 1-8-8-8-7 0-10 3z" fill="#3bc6c0"/><path d="M18 1q12 3 12 13 0 6-8 6-5 0-3-4 3-7-1-15z" fill="#5fd56b"/><path d="M12 13q-3 7 2 11 5 3 12 1-5 6-13 5Q1 26 3 17q3-7 9-4z" fill="#0c4a93"/><path d="M13 13q-2 6 3 9 5 2 11-1l-1 3q-7 2-12-1-4-4-1-10z" fill="#d5d5d5"/></svg>
  <div class="ml-[22px] flex h-full w-[51px] flex-col items-center">
    <svg class="mt-[11px] h-[27px] w-[28px]" viewBox="0 0 28 27"><path d="M21 20q-3 5-8 4.500A10 10 0 1 1 23.500 13.500H8" fill="none" stroke="#fff" stroke-width="7"/><path d="M21 20q-3 5-8 4.500A10 10 0 1 1 23.500 13.500H8" fill="none" stroke="#56b52e" stroke-width="4.500"/><path d="M3 26Q-1 19 11 8T26 3" fill="none" stroke="#7ccc3b" stroke-width="2"/></svg>
    <span class="mt-auto flex h-[3px] w-full bg-[#76b9ed]"><i class="w-[41px] bg-[#0078d7]"></i></span>
  </div>
  <div class="ml-3 flex h-full w-[50px] flex-col items-center">
    <svg class="mt-[13px] h-6 w-7" viewBox="0 0 28 24"><path d="M0 0h11l2 3h13v19H0z" fill="#e8a317"/><path d="M1 5h26v18H1z" fill="#ffd45c"/><path d="M5 24V12h18v12h-4v-7h-10v7z" fill="#3a96dd"/></svg>
    <span class="mt-auto h-[3px] w-full bg-[#0078d7]"></span>
  </div>
  <div class="ml-[6px] flex h-full w-[61px] flex-col items-center bg-[#eee]">
    <svg class="mt-3 h-[26px] w-[27px]" viewBox="0 0 27 26"><path d="M13 3h13v20H13z" fill="#fff" stroke="#1e7145" stroke-width="1.500"/><path d="M17 7h3M22 7h3M17 11h3M22 11h3M17 15h3M22 15h3M17 19h3M22 19h3" stroke="#1e7145" stroke-width="2"/><path d="M0 3l16-3v26L0 23z" fill="#1e7145"/><path d="M4.500 8.500l7 9.500M11.500 8l-7 10" stroke="#fff" stroke-width="2.200"/></svg>
    <span class="mt-auto h-[3px] w-full bg-[#0078d7]"></span>
  </div>
  <div class="ml-[6px] flex h-full w-[51px] flex-col items-center">
    <svg class="mt-[10px] h-7 w-[28px]" viewBox="0 0 28 28"><ellipse cx="13" cy="9" rx="12" ry="7.500" fill="#f6e9e9" stroke="#df4b4b" stroke-width="1.800" transform="rotate(-25 13 9)"/><path d="M14 3l3 15M10 6l10 12" stroke="#888" stroke-width="1.500"/><circle cx="18" cy="23.500" r="3.200" fill="none" stroke="#2b8fd8" stroke-width="2.200"/><circle cx="24" cy="18" r="3.200" fill="none" stroke="#2b8fd8" stroke-width="2.200"/></svg>
    <span class="mt-auto h-[3px] w-full bg-[#0078d7]"></span>
  </div>
  <span class="flex-1"></span>
  <svg class="h-5 w-[18px]" viewBox="0 0 18 20"><circle cx="12.500" cy="4.500" r="3.300" fill="none" stroke="#000" stroke-width="1.300"/><circle cx="5.500" cy="10.500" r="3.300" fill="none" stroke="#000" stroke-width="1.300"/><path d="M.5 19q0-5 5-5t5 5M9 10q8-4 9 3" fill="none" stroke="#000" stroke-width="1.300"/></svg>
  <svg class="ml-[28px] h-[9px] w-4" viewBox="0 0 16 9"><path d="M.5 8.500L8 1l7.500 7.500" fill="none" stroke="#000" stroke-width="1.400"/></svg>
  <svg class="ml-3 h-5 w-5" viewBox="0 0 20 20"><path d="M0 0h20v20H0z" fill="#a14d18"/><path d="M1 1h18v18H1z" fill="none" stroke="#d99b45"/><path d="M2 16L15 2l4 3L7 18z" fill="#3a2a22"/><path d="M3 16L14 4l3 2L7 17z" fill="#d8c7a8"/><circle cx="9" cy="6" r="3.500" fill="#3c74c4" stroke="#eee"/><path d="M5 15l10-8" stroke="#333" stroke-width="1.500"/></svg>
  <svg class="ml-[9px] h-[14px] w-[21px]" viewBox="0 0 21 14"><path d="M7 5.500h10.500v6H5v-3" fill="#000"/><path d="M19 6h2v5h-2zM0 2h5v3L3.500 7h-2L0 5zM1 0h1v2H1zM3.500 0h1v2h-1z" fill="#000"/><path d="M7 3.500h12v10H3.500V9.500H2V7" fill="none" stroke="#000"/></svg>
  <svg class="ml-3 h-[17px] w-[18px]" viewBox="0 0 18 17"><path d="M1 17Q1 3 17 1M5 17Q5 8 17 5.500" fill="none" stroke="#777" stroke-width="1.300"/><path d="M9 17q0-6 8-7M12.500 17q0-3 4.500-3.500" fill="none" stroke="#000" stroke-width="1.300"/><circle cx="15.500" cy="15.500" r="1.500"/></svg>
  <svg class="ml-[9px] h-4 w-5" viewBox="0 0 20 16"><path d="M.5 5.500H3L7.500 1.500v13L3 10.500H.5z" fill="none" stroke="#000" stroke-width="1.200"/><path d="M10 5.500q2 2.500 0 5" fill="none" stroke="#000" stroke-width="1.200"/><path d="M13 3.500q3.500 4.500 0 9M16 1q5.500 7 0 14" fill="none" stroke="#999" stroke-width="1.200"/></svg>
  <svg class="ml-[15px] h-5 w-5" viewBox="0 0 20 20"><path d="M7 17L15 1q2-1 3 1L10 18l-3 1.500zM7 8q-6 0-6 6 0 5 4 4 3-1 4-5M11 14q1 4 4 1t5-4" fill="none" stroke="#000" stroke-width="1.400"/></svg>
  <span class="ml-[15px] pb-[2px] text-xl text-[#666]">英</span>
  <svg class="ml-[15px] h-5 w-5"><use href="#sogou"/></svg>
  <div class="ml-[21px] w-[78px] pb-[2px] text-center leading-5 whitespace-nowrap">17:20 周三<br>2023/5/10</div>
  <div class="relative ml-[21px] h-[26px] w-[29px]"><svg class="mt-1 h-[18px] w-5" viewBox="0 0 20 18"><path d="M0 0h20v18H0z"/><path d="M7 5l6 4-6 4z" fill="#fff"/></svg><b class="absolute top-3 left-3 h-[17px] w-[17px] rounded-[3px] bg-[#e00000] text-center text-xs leading-4 font-medium text-white">4</b></div>
  <svg class="ml-[21px] h-5 w-5" viewBox="0 0 20 20"><path d="M.7.700h18.600v14.500H13l-3 3.500-3-3.500H.7z" fill="none" stroke="#000" stroke-width="1.400"/></svg>
  <span class="mr-[5px] ml-[26px] h-full w-px bg-[#aaa]"></span>
</div>

<!-- Input-method bar -->
<div class="absolute right-[18px] bottom-[50px] flex h-8 w-[206px] items-center justify-between rounded border border-[#b8cde8] bg-white pr-[6px] pl-[31px] text-lg leading-5 text-[#0a6cd6]">
  <svg class="absolute bottom-[-2px] -left-4 h-[38px] w-[38px]"><use href="#sogou"/></svg>
  <b>英</b>
  <svg class="h-4 w-4" viewBox="0 0 16 16"><circle cx="3" cy="4" r="2.200" fill="currentColor"/><path d="M11 9q0-2 2-2t2 3q0 3-4 5 2-3 1.500-4-1.500 0-1.500-2z" fill="currentColor"/></svg>
  <svg class="h-5 w-4" viewBox="0 0 16 20"><rect x="4.500" width="7" height="13" rx="3.500" fill="currentColor"/><path d="M1.500 8q0 7 6.500 7t6.500-7M8 15v3M5 19h6" fill="none" stroke="currentColor" stroke-width="1.700"/></svg>
  <svg class="h-4 w-[19px]" viewBox="0 0 19 16"><rect x="1" y="1" width="17" height="14" rx="2" fill="none" stroke="currentColor" stroke-width="2"/><path d="M4 5h11M4 8.500h11M4 12h11" stroke="currentColor" stroke-width="1.800" stroke-dasharray="2 1"/></svg>
  <svg class="h-[18px] w-[19px]" viewBox="0 0 19 18"><path d="M6 0q3.500 4 7 0l6 3-2 6-2.500-1v10h-10V8L2 9 0 3z" fill="currentColor"/></svg>
  <svg class="h-[18px] w-[18px]" viewBox="0 0 18 18"><rect width="8" height="8" rx="2.500" fill="currentColor"/><rect y="10" width="8" height="8" rx="2.500" fill="currentColor"/><rect x="10" y="10" width="8" height="8" rx="2.500" fill="currentColor"/><circle cx="14" cy="4" r="3" fill="none" stroke="currentColor" stroke-width="2.500"/></svg>
</div>
<div class="absolute right-1 bottom-[123px] h-[73px] w-2 rounded-full bg-linear-to-b from-[#999] from-35% via-[#22c76a] via-36% to-[#7dff7a] shadow"></div>

<!-- PivotTable options dialog -->
<div role="dialog" aria-label="数据透视表选项" class="absolute top-[221px] left-[603px] flex h-[731px] w-[483px] flex-col border border-[#666] bg-[#f0f0f0] text-black shadow-[0_6px_24px_rgba(0,0,0,0.4)]">
  <div class="flex h-[37px] shrink-0 items-center bg-white pr-6 pb-px pl-[9px]">
    <span class="flex-1">数据透视表选项</span>
    <button class="mr-12" aria-label="帮助">?</button>
    <button aria-label="关闭"><svg class="h-[13px] w-[13px]" viewBox="0 0 13 13"><path d="M.5.500l12 12M12.500.500l-12 12" stroke="#000" stroke-width="1.200"/></svg></button>
  </div>
  <div class="mt-[10px] flex h-[30px] shrink-0 items-center pl-2">
    <label for="pname" class="w-[135px]">数据透视表名称(<u>N</u>):</label>
    <input id="pname" value="数据透视表2" class="h-[30px] w-[218px] border border-[#ababab] bg-white px-[3px] pb-[5px]">
  </div>
  <div class="mt-[13px] mr-[11px] ml-[10px] grid h-[29px] shrink-0 grid-cols-[149px_151px_1fr] border-t border-[#d9d9d9]">
    <button class="border-r border-[#d9d9d9]">打印</button><button class="border-r border-[#d9d9d9]">数据</button><button class="border-r border-[#d9d9d9]">可选文字</button>
  </div>
  <div class="mr-[11px] ml-2 grid h-[31px] shrink-0 grid-cols-[166px_162px_1fr]">
    <button class="relative z-10 -mt-[2px] -mb-px border border-b-0 border-[#d9d9d9] bg-white pr-[3px]">布局和格式</button>
    <button class="border-t border-r border-[#d9d9d9]">汇总和筛选</button>
    <button class="border-t border-r border-[#d9d9d9]">显示</button>
  </div>
  <div class="mr-[10px] ml-2 flex h-[521px] shrink-0 flex-col border border-[#d9d9d9] bg-white pt-3 pr-[9px] pl-[11px]">
    <div class="flex h-6 shrink-0 items-center gap-[5px]">布局<span class="h-px flex-1 bg-[#d9d9d9]"></span></div>
    <label class="mt-[5px] flex h-[30px] items-center gap-[5px] pl-3"><input type="checkbox" class="h-4 w-4 appearance-none border border-[#333]"><span>合并且居中排列带标签的单元格(<u>M</u>)</span></label>
    <div class="mt-[3px] flex h-[30px] shrink-0 items-center pl-3">
      <label for="indent" class="w-[178px]">压缩表单中缩进行标签(<u>C</u>):</label>
      <span class="mr-1 flex h-[30px] w-[77px] border border-[#ababab]"><input id="indent" value="1" class="w-[54px] px-[3px] pb-[4px]"><span class="m-px flex flex-1 flex-col gap-px">
        <button class="flex flex-1 items-center justify-center border border-[#ababab] bg-[#f0f0f0]"><svg class="h-1 w-[7px]"><use href="#up-lg"/></svg></button><button class="flex flex-1 items-center justify-center border border-[#ababab] bg-[#f0f0f0]"><svg class="h-1 w-[7px]"><use href="#down"/></svg></button></span></span>
      <span>字符</span>
    </div>
    <div class="mt-[13px] h-px w-[341px] shrink-0 bg-[#d9d9d9]"></div>
    <div class="mt-3 flex h-[33px] shrink-0 items-center pl-3">
      <label for="area" class="w-[194px]">在报表筛选区域显示字段(<u>D</u>):</label>
      <span class="grid h-[33px] w-[101px] items-stretch border border-[#ababab]"><select id="area" class="col-start-1 row-start-1 appearance-none pl-[3px]"><option>垂直并排</option><option>水平并排</option></select><span class="pointer-events-none col-start-1 row-start-1 flex w-[22px] items-center justify-center justify-self-end border border-[#ababab] bg-[#e1e1e1]"><svg class="h-[5px] w-[9px]" viewBox="0 0 9 5"><path d="M0 0l4.500 4.500L9 0" fill="none" stroke="#444"/></svg></span></span>
    </div>
    <div class="mt-[5px] flex h-[30px] shrink-0 items-center pl-3">
      <label for="percol" class="w-[169px]">每列报表筛选字段数(<u>F</u>):</label>
      <span class="flex h-[30px] w-[77px] border border-[#ababab]"><input id="percol" value="0" class="w-[54px] px-[3px] pb-[4px]"><span class="m-px flex flex-1 flex-col gap-px">
        <button class="flex flex-1 items-center justify-center border border-[#ababab] bg-[#f0f0f0]"><svg class="h-1 w-[7px]"><use href="#up-lg"/></svg></button><button class="flex flex-1 items-center justify-center border border-[#ababab] bg-[#f0f0f0]"><svg class="h-1 w-[7px]"><use href="#down"/></svg></button></span></span>
    </div>
    <div class="mt-[11px] flex h-6 shrink-0 items-center gap-[5px]">格式<span class="h-px flex-1 bg-[#d9d9d9]"></span></div>
    <div class="mt-2 flex h-[30px] shrink-0 items-center pl-3">
      <label class="flex w-[194px] items-center gap-[5px]"><span class="grid h-4 w-4 text-[#0078d7]"><input type="checkbox" checked class="col-start-1 row-start-1 h-4 w-4 appearance-none border border-[#0078d7]"><svg class="pointer-events-none col-start-1 row-start-1 h-4 w-4"><use href="#tick"/></svg></span><span>对于错误值，显示(<u>E</u>):</span></label>
      <span class="relative flex"><input aria-label="错误值显示" class="h-[30px] w-[88px] border border-[#ababab]"><i class="absolute top-[3px] left-1 h-5 w-px bg-black"></i></span>
    </div>
    <div class="mt-[5px] flex h-[30px] shrink-0 items-center pl-3">
      <label class="flex w-[194px] items-center gap-[5px]"><span class="grid h-4 w-4 text-[#333]"><input type="checkbox" checked class="col-start-1 row-start-1 h-4 w-4 appearance-none border border-[#333]"><svg class="pointer-events-none col-start-1 row-start-1 h-4 w-4"><use href="#tick"/></svg></span><span>对于空单元格，显示(<u>S</u>):</span></label>
      <input aria-label="空单元格显示" class="h-[30px] w-[88px] border border-[#ababab]">
    </div>
    <div class="mt-[13px] h-px w-[341px] shrink-0 bg-[#d9d9d9]"></div>
    <label class="mt-[14px] flex h-5 items-center gap-[5px] pl-3"><span class="grid h-4 w-4 text-[#333]"><input type="checkbox" checked class="col-start-1 row-start-1 h-4 w-4 appearance-none border border-[#333]"><svg class="pointer-events-none col-start-1 row-start-1 h-4 w-4"><use href="#tick"/></svg></span><span>更新时自动调整列宽(<u>A</u>)</span></label>
    <label class="mt-[10px] flex h-5 items-center gap-[5px] pl-3"><span class="grid h-4 w-4 text-[#333]"><input type="checkbox" checked class="col-start-1 row-start-1 h-4 w-4 appearance-none border border-[#333]"><svg class="pointer-events-none col-start-1 row-start-1 h-4 w-4"><use href="#tick"/></svg></span><span>更新时保留单元格格式(<u>P</u>)</span></label>
  </div>
  <div class="mt-[13px] mr-[9px] flex justify-end gap-[13px]">
    <button class="h-[34px] w-[99px] border-2 border-[#0078d7] bg-[#e1e1e1]">确定</button>
    <button class="h-[34px] w-[99px] border border-[#ababab] bg-[#e1e1e1]">取消</button>
  </div>
</div>

<script>
const widths = [35,129,110,149,116,129,80,80,80,80,80,80,80,80,80,80,80,80];
document.getElementById('cols').innerHTML = widths.map(w => `<col style="width:${w}px">`).join('');
document.getElementById('heads').innerHTML =
  '<th class="h-[23px] border-r border-b border-[#999] bg-[#e6e6e6]"><svg class="mt-[3px] ml-4 h-[15px] w-[15px]" viewBox="0 0 15 15"><path d="M15 0v15H0z" fill="#b5b5b5"/></svg></th>' +
  [...'ABCDEFGHIJKLMNOPQ'].map(c => c === 'C'
    ? '<th class="h-[23px] border-r border-b-2 border-r-[#ababab] border-b-[#217346] bg-[#d2d2d2] font-normal text-[#217346]">C</th>'
    : `<th class="h-[23px] border-r border-b border-r-[#ababab] border-b-[#999] bg-[#e6e6e6] font-normal text-[#333]">${c}</th>`).join('');
const data = {
  3:['行标签','求和项:数量','求和项:合同金额','求和项:成本','求和项:利润率'],
  4:['CCS-120','1','0','235000','#DIV/0!'],
  5:['CCS-128','2','520000','181290.56','0.651364308'],
  6:['CCS-192','2','600000','216185.26','0.639691233'],
  7:['MMS-120A4','1','90000','61977.79','0.311357889'],
  8:['SX-D-128','7','1585000','1047900.82','0.338863836'],
  9:['SX-D-256','1','460000','191408.59','0.58389437'],
  10:['SX-G-128','6','513000','767783.54','-0.496654074'],
  11:['SX-G-192','3','375000','223404.13','0.404255653'],
  12:['SX-G-192换代','1','','32427.6','#DIV/0!'],
  13:['SX-G-256','3','550000','631869.93','-0.148854418'],
  14:['SX-G-256换代','1','0','177625.24','#DIV/0!'],
  15:['销售零件','10','4000','1500','0.625'],
  16:['总计','38','4697000','3768373.46','0.19770631']
};
const big = s => s.replace(/[\u4e00-\u9fff]+/g, m => `<span class="text-lg leading-4">${m}</span>`);
let html = '';
for (let r = 1; r <= 29; r++) {
  html += r === 5
    ? '<tr><th class="h-[23px] border-r-2 border-b border-r-[#217346] border-b-[#ababab] bg-[#d2d2d2] font-normal text-[#217346]">5</th>'
    : `<tr><th class="h-[23px] border-r border-b border-r-[#999] border-b-[#ababab] bg-[#e6e6e6] font-normal text-[#333]">${r}</th>`;
  for (let c = 0; c < 17; c++) {
    const v = data[r] && c < 5 ? data[r][c] : null;
    if (v === null) { html += '<td class="h-[23px] border-r border-b border-[#d4d4d4] bg-white"></td>'; continue; }
    let cls = 'relative h-[23px] border-b align-top leading-5 pl-[3px] ';
    cls += c === 4 ? 'pr-[6px] ' : 'pr-1 ';
    cls += r === 3 ? 'border-[#9bc2e6] bg-[#ddebf7] font-bold text-left '
      : r === 16 ? 'border-[#ddebf7] bg-[#ddebf7] font-bold '
      : r === 15 ? 'border-[#9bc2e6] bg-white ' : 'border-white bg-white ';
    if (c === 0 && r !== 3) cls += 'text-[17px] ';
    if (r !== 3 && c > 0) cls += v[0] === '#' ? 'text-center' : 'text-right';
    let extra = '';
    if (r === 3 && c === 0) extra = '<button class="absolute top-0 right-px flex h-[21px] w-[21px] items-center justify-center border border-[#ababab] bg-white text-[#666]" aria-label="筛选"><svg class="h-1 w-[7px]"><use href="#down"/></svg></button>';
    if (r === 5 && c === 2) extra = '<span class="absolute -top-[2px] -right-[1px] -bottom-[2px] -left-[1px] z-10 border-2 border-[#217346]"></span><span class="absolute -right-[2px] -bottom-[3px] z-10 h-[6px] w-[6px] border-t border-l border-white bg-[#217346]"></span>';
    html += `<td class="${cls}">${big(v)}${extra}</td>`;
  }
  html += '</tr>';
}
document.getElementById('rows').innerHTML = html;

const fields = [['规格型号',1],['数量',1],['合同金额',1],['成本',1],['机器号',0],['单据号',0],['利润率%',0],['字段1',0],['利润率',1]];
document.getElementById('fields').innerHTML = fields.map(([n, on]) =>
  `<label class="flex h-[25px] items-center gap-[6px] ${on ? 'font-bold' : ''}"><span class="grid h-4 w-4 shrink-0"><input type="checkbox" ${on ? 'checked' : ''} class="col-start-1 row-start-1 h-4 w-4 appearance-none border border-[#ababab] bg-white">${on ? '<svg class="pointer-events-none col-start-1 row-start-1 h-4 w-4"><use href="#tick-bold"/></svg>' : ''}</span><span class="pb-px">${n}</span></label>`).join('');
</script>
</body>
</html>
